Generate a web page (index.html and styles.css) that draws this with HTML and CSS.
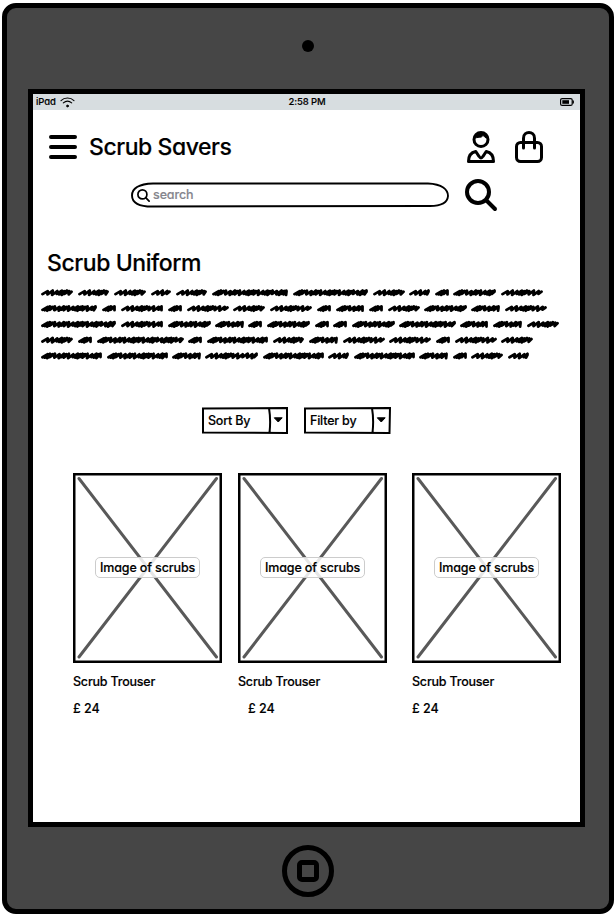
FILE: index.html
```
<!DOCTYPE html>
<html lang="en">
<head>
<meta charset="utf-8">
<title>Scrub Savers</title>
<link rel="stylesheet" href="styles.css">
</head>
<body>
<div class="device">
  <div class="bezel-top"><span class="camera"></span></div>
  <div class="screen">
    <div class="status">
      <span class="carrier">iPad
        <svg width="15" height="11" viewBox="0 0 15 11" fill="none" stroke="#000" stroke-linecap="round"><path d="M1 3.6C4.500.2 10.500.2 14 3.600" stroke-width="1.100"/><path d="M3.300 5.900C6 3.700 9 3.700 11.700 5.900" stroke-width="1.100"/><circle cx="7.500" cy="9" r="1" fill="#000" stroke-width=".7"/></svg>
      </span>
      <span class="clock">2:58 PM</span>
      <svg class="battery" width="14" height="8" viewBox="0 0 14 8"><rect x=".6" y=".6" width="11.600" height="6.800" rx="1.500" fill="none" stroke="#000" stroke-width="1.200"/><path d="M13.200 2.400v3.200" stroke="#000" stroke-width="1.400"/><rect x="2.300" y="2.200" width="6.700" height="3.600"/></svg>
    </div>
    <header class="header">
      <svg class="menu" width="28" height="24" viewBox="0 0 28 24" stroke="#000" stroke-width="4" stroke-linecap="round"><path d="M2 2h24M2 12h24M2 22h24"/></svg>
      <h1 class="brand">Scrub Savers</h1>
      <svg width="28" height="32" viewBox="0 0 28 32" fill="none" stroke="#000" stroke-width="3" stroke-linejoin="round"><circle cx="14" cy="8.500" r="7"/><path d="M7 7.500C7 .8 20-.5 21 7 17.500 7.500 17.500 5 16 4.300 14.500 7.500 11 5.500 7 7.500Z" fill="#000" stroke-width="1"/><path d="M1.500 30.500C1.500 25.500 3.500 21.500 8.800 20.500L12 25.300Q14 28.500 16 25.300L19.200 20.500C24.500 21.500 26.500 25.500 26.500 30.500Z"/></svg>
      <svg class="bag" width="28" height="32" viewBox="0 0 28 32" fill="none" stroke="#000" stroke-width="3" stroke-linecap="round"><rect x="1.500" y="11.500" width="25" height="19" rx="4"/><path d="M8.500 17V7.200C8.500-.3 19.500-.3 19.500 7.200V17"/></svg>
    </header>
    <div class="search-row">
      <div class="search">
        <svg class="outline" width="320" height="26" viewBox="0 0 320 26" fill="#fff" stroke="#000" stroke-width="1.900"><path d="M23 1.500H298C312 2 318 7.500 318 14C317.500 20.500 311 24 300 24L22 24.500C9 24.500 2 21 2 13.500C2 6.500 9 2 23 1.500Z"/></svg>
        <svg class="glass" width="13" height="13" viewBox="0 0 13 13" fill="none" stroke="#000" stroke-width="1.700" stroke-linecap="round"><circle cx="5.400" cy="5.400" r="4.500"/><path d="M8.700 8.700 12.100 12.100"/></svg>
        <span class="placeholder">search</span>
      </div>
      <svg class="lens" width="33" height="33" viewBox="0 0 33 33" fill="none" stroke="#000" stroke-width="4" stroke-linecap="round"><circle cx="13" cy="13" r="11"/><path d="M21.500 21.500 30 30"/></svg>
    </div>
    <h2 class="title">Scrub Uniform</h2>
    <svg class="blurb" width="520" height="76" viewBox="0 0 520 76"></svg>
    <div class="filters">
      <div class="select">
        <svg class="outline" width="86" height="27" viewBox="0 0 86 27" fill="none" stroke="#000" stroke-width="2"><path d="M1 1.500 85 1V26L1 25.500ZM67 1Q69 13 67.500 26"/><path d="M72.300 10.800h7.900l-3.950 4.200z" fill="#000" stroke-width="1"/></svg><span>Sort By</span>
      </div>
      <div class="select">
        <svg class="outline" width="87" height="27" viewBox="0 0 87 27" fill="none" stroke="#000" stroke-width="2"><path d="M1 1.500 86 1 85.500 26 1 25.500ZM68 1Q70 13 68.500 26"/><path d="M73.300 10.800h7.900l-3.950 4.200z" fill="#000" stroke-width="1"/></svg><span>Filter by</span>
      </div>
    </div>
    <main class="products">
      <article>
        <div class="image"><svg class="cross" width="149" height="190" viewBox="0 0 149 190"><rect x="1.250" y="1.250" width="146.500" height="187.500"/><path d="M6 5.500 143.500 184M143.500 5.500 6 184"/></svg><span class="label">Image of scrubs</span></div>
        <p class="name">Scrub Trouser</p><p class="price">£ 24</p>
      </article>
      <article>
        <div class="image"><svg class="cross" width="149" height="190" viewBox="0 0 149 190"><rect x="1.250" y="1.250" width="146.500" height="187.500"/><path d="M6 5.500 143.500 184M143.500 5.500 6 184"/></svg><span class="label">Image of scrubs</span></div>
        <p class="name">Scrub Trouser</p><p class="price indented">£ 24</p>
      </article>
      <article>
        <div class="image"><svg class="cross" width="149" height="190" viewBox="0 0 149 190"><rect x="1.250" y="1.250" width="146.500" height="187.500"/><path d="M6 5.500 143.500 184M143.500 5.500 6 184"/></svg><span class="label">Image of scrubs</span></div>
        <p class="name">Scrub Trouser</p><p class="price">£ 24</p>
      </article>
    </main>
  </div>
  <div class="bezel-bottom"><span class="home"><span class="home-mark"></span></span></div>
</div>
<script src="blurb.js"></script>
</body>
</html>
```
FILE: styles.css
```
* { box-sizing: border-box; }
body {
  margin: 0;
  padding: 3px 2px;
  background: #fff;
  color: #000;
  font: 500 12.5px/18px Inter, "Liberation Sans", sans-serif;
  font-feature-settings: "cv11";
  letter-spacing: -.2px;
  -webkit-text-stroke: .15px currentColor;
}
svg { display: block; flex: none; }
h1, h2, p { margin: 0; font-weight: 500; white-space: nowrap; }
.device {
  display: flex;
  flex-direction: column;
  width: 612px;
  height: 911px;
  border: 5px solid #000;
  border-radius: 14px;
  background: #464646;
}
.bezel-top { height: 81px; padding-top: 32px; flex: none; }
.camera { display: block; width: 12px; height: 12px; margin: 0 auto; border-radius: 50%; background: #000; }
.screen {
  width: 557px;
  height: 738px;
  margin-left: 21px;
  border: 5px solid #000;
  background: #fff;
  flex: none;
}
.status {
  display: grid;
  grid-template-columns: 1fr auto 1fr;
  align-items: center;
  height: 16px;
  padding: 0 6px 0 3px;
  background: #d7dde0;
  font-size: 9.5px;
  line-height: 16px;
  letter-spacing: -.1px;
}
.carrier { display: flex; gap: 4px; }
.carrier svg { margin-top: 3px; }
.clock { padding-left: 4px; }
.battery { justify-self: end; }
.header { display: flex; align-items: center; height: 32px; margin-top: 21px; padding: 0 37px 0 16px; }
.brand { flex: 1; margin-left: 12px; font-size: 23px; line-height: 30px; letter-spacing: -.45px; }
.bag { margin-left: 20px; }
.search-row { display: flex; align-items: flex-start; gap: 15px; margin: 15px 0 0 97px; }
.search { position: relative; display: flex; align-items: center; width: 320px; height: 26px; margin-top: 4px; padding-left: 7px; gap: 3px; }
.outline { position: absolute; left: 0; top: 0; }
.glass { position: relative; }
.lens { margin-top: 1px; }
.placeholder { position: relative; color: #85858d; letter-spacing: -.1px; }
.title { margin: 36px 0 0 14px; font-size: 23px; line-height: 30px; letter-spacing: -.42px; }
.blurb { margin: 8px 0 0 8px; }
.filters { display: flex; gap: 16px; margin: 45px 0 0 169px; }
.select { position: relative; width: 86px; height: 27px; padding-left: 6px; line-height: 27px; white-space: nowrap; }
.products { display: flex; margin: 39px 0 0 40px; }
.products article { width: 149px; margin-right: 16px; }
.products article:nth-child(2) { margin-right: 25px; }
.products article:last-child { margin-right: 0; }
.image { position: relative; display: grid; justify-items: center; align-items: start; width: 149px; height: 190px; padding-top: 84px; }
.cross { position: absolute; left: 0; top: 0; fill: none; stroke: #595959; stroke-width: 3; stroke-linecap: round; }
.cross rect { stroke: #000; stroke-width: 2.5; }
.label {
  position: relative;
  width: 105px;
  height: 21px;
  border: 1px solid #ccc;
  border-radius: 5px;
  background: rgba(255, 255, 255, .85);
  line-height: 19px;
  text-align: center;
  letter-spacing: -.12px;
  white-space: nowrap;
}
.name { margin-top: 10px; }
.price { margin-top: 9px; letter-spacing: 0; }
.indented { padding-left: 10px; }
.bezel-bottom { padding-top: 18px; }
.home { display: grid; place-items: center; width: 52px; height: 52px; margin: 0 auto; border: 5px solid #000; border-radius: 50%; }
.home-mark { width: 22px; height: 22px; border: 5px solid #000; border-radius: 5px; }
```
FILE: blurb.js
```
// Scribbled placeholder copy: start and end of every word, line by line.
const lines = [
  [41,73,78,109,114,146,151,171,176,207,212,288,293,368,373,405,409,430,435,449,453,496,501,543],
  [41,97,102,116,121,163,168,182,187,229,233,265,270,312,317,331,336,364,369,383,388,420,424,467,471,500,505,547],
  [41,116,121,163,168,211,215,244,248,262,267,310,315,329,333,347,352,395,399,456,460,488,493,522,527,559],
  [41,73,78,92,97,184,188,202,207,268,273,304,309,338,343,385,389,431,436,450,455,497,501,533],
  [41,102,107,168,172,201,205,258,263,324,328,349,354,415,419,448,453,467,471,503,508,529]
];
const dense = [2.2, 2.4, 2.6, 4.6, 4.4, 2.4, 2.6, 4.4, 4.6, 2.5];
const loose = [5, 4.6, 4.6, 2.4, 2.6, 2.4, 4.6, 4.8];
let d = '';
lines.forEach((line, row) => {
  const y = 6.5 + row * 15.8;
  for (let i = 0; i < line.length; i += 2) {
    let x = line[i] - 39.5;
    const end = line[i + 1] - 42.5;
    const width = line[i + 1] - line[i];
    const open = (width > 19 && width < 23) || (width > 30 && width < 33) || width === 42 || width === 53;
    const steps = open ? loose : dense;
    let k = 0;
    d += `M${x} ${y + 1.6}`;
    while (x < end - 3) {
      const top = Math.min(x + 5.2, end);
      x += steps[k++ % steps.length];
      d += `L${top} ${y - 1.9 + (k % 2) * .5}L${Math.min(x, end)} ${y + 1.4 + (k % 3) * .5}`;
    }
    d += `L${end} ${y - .8}`;
  }
});
document.querySelector('.blurb').innerHTML =
  `<path d="${d}" fill="none" stroke="#000" stroke-width="2.8" stroke-linecap="round" stroke-linejoin="round"/>`;
```
